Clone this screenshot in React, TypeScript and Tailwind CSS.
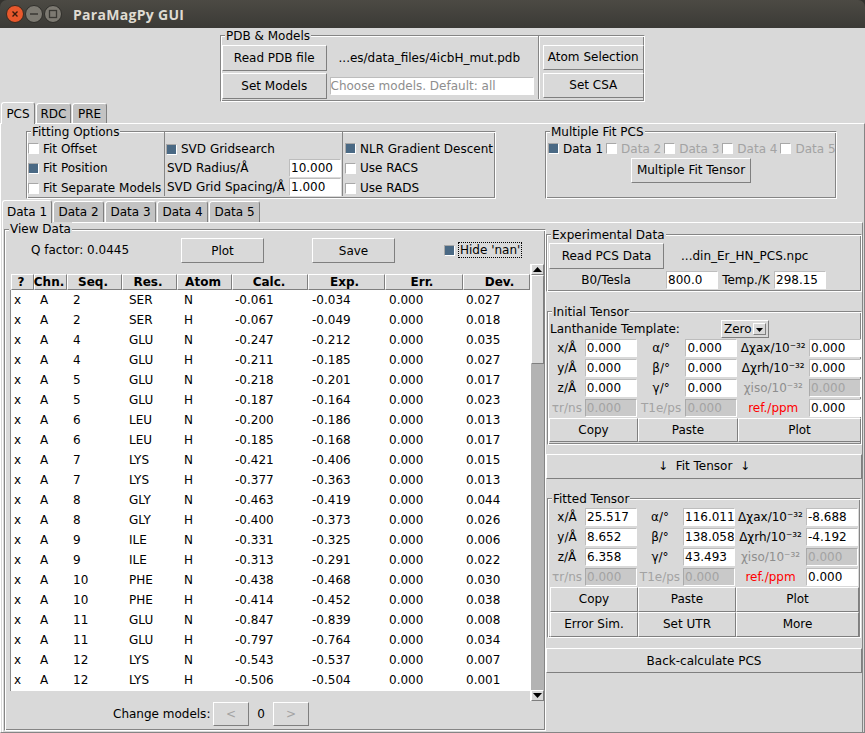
import React from "react";

const RAISED = "flex items-center justify-center bg-[#d9d9d9] border border-t-white border-l-white border-r-[#7f7f7f] border-b-[#7f7f7f] whitespace-nowrap";

function Btn({ children, className = "" }: { children: React.ReactNode; className?: string }) {
  return <div className={`${RAISED} ${className}`}>{children}</div>;
}

function Frame({ label, className = "", labelTop = "top-[-7px]", children }: { label: string; className?: string; labelTop?: string; children?: React.ReactNode }) {
  return (
    <div className={`relative border border-t-[#858585] border-l-[#858585] border-r-white border-b-white shadow-[inset_1px_1px_0_#fff,inset_-1px_-1px_0_#858585] ${className}`}>
      <span className={`absolute ${labelTop} left-[4px] bg-[#d9d9d9] px-px leading-[15px] whitespace-nowrap`}>{label}</span>
      {children}
    </div>
  );
}

function Entry({ value, muted, disabled, className = "" }: { value: string; muted?: boolean; disabled?: boolean; className?: string }) {
  const look = disabled
    ? "bg-[#c9c9c9] text-[#a3a3a3] border-t-[#aaaaaa] border-l-[#aaaaaa] border-r-white border-b-white"
    : muted
    ? "bg-white text-[#8e8e8e] border-t-[#bdbdbd] border-l-[#bdbdbd] border-r-white border-b-white"
    : "bg-white text-black border-t-[#bdbdbd] border-l-[#bdbdbd] border-r-white border-b-white";
  return <div className={`h-[18px] w-[52px] flex-none border pl-[1px] leading-[16px] overflow-hidden whitespace-nowrap ${look} ${className}`}>{value}</div>;
}

function Check({ checked, className = "" }: { checked?: boolean; className?: string }) {
  return (
    <span className={`inline-block flex-none w-[11px] h-[11px] border border-t-[#a8a8a8] border-l-[#a8a8a8] border-r-white border-b-white ${checked ? "bg-[#4a6984]" : "bg-white"} ${className}`} />
  );
}

function CheckRow({ label, checked, className = "" }: { label: string; checked?: boolean; className?: string }) {
  return (
    <div className={`flex items-center whitespace-nowrap ${className}`}>
      <Check checked={checked} />
      <span className="ml-[4px]">{label}</span>
    </div>
  );
}

function TabBtn({ label, active, className = "" }: { label: string; active?: boolean; className?: string }) {
  return (
    <div
      className={`flex items-center justify-center rounded-t-[3px] border-t border-l border-r border-t-white border-l-white border-r-[#7f7f7f] whitespace-nowrap ${
        active ? "bg-[#d9d9d9] relative z-10 mb-[-1px]" : "bg-[#c3c3c3] mt-[1px]"
      } ${className}`}
    >
      {label}
    </div>
  );
}

type Row = [string, string, string, string, string, string];
const ROWS: Row[] = [
  ["2", "SER", "N", "-0.061", "-0.034", "0.027"],
  ["2", "SER", "H", "-0.067", "-0.049", "0.018"],
  ["4", "GLU", "N", "-0.247", "-0.212", "0.035"],
  ["4", "GLU", "H", "-0.211", "-0.185", "0.027"],
  ["5", "GLU", "N", "-0.218", "-0.201", "0.017"],
  ["5", "GLU", "H", "-0.187", "-0.164", "0.023"],
  ["6", "LEU", "N", "-0.200", "-0.186", "0.013"],
  ["6", "LEU", "H", "-0.185", "-0.168", "0.017"],
  ["7", "LYS", "N", "-0.421", "-0.406", "0.015"],
  ["7", "LYS", "H", "-0.377", "-0.363", "0.013"],
  ["8", "GLY", "N", "-0.463", "-0.419", "0.044"],
  ["8", "GLY", "H", "-0.400", "-0.373", "0.026"],
  ["9", "ILE", "N", "-0.331", "-0.325", "0.006"],
  ["9", "ILE", "H", "-0.313", "-0.291", "0.022"],
  ["10", "PHE", "N", "-0.438", "-0.468", "0.030"],
  ["10", "PHE", "H", "-0.414", "-0.452", "0.038"],
  ["11", "GLU", "N", "-0.847", "-0.839", "0.008"],
  ["11", "GLU", "H", "-0.797", "-0.764", "0.034"],
  ["12", "LYS", "N", "-0.543", "-0.537", "0.007"],
  ["12", "LYS", "H", "-0.506", "-0.504", "0.001"],
];

const GRID = "grid grid-cols-[23px_33px_55px_55px_55px_76px_77px_78px_67px]";
const HEADERS: [string, string][] = [
  ["?", "mr-[3px]"],
  ["Chn.", "mr-[3px]"],
  ["Seq.", "mr-[3px]"],
  ["Res.", "mr-[3px]"],
  ["Atom", "mr-[3px]"],
  ["Calc.", "mr-[2px]"],
  ["Exp.", "mr-[4px]"],
  ["Err.", "mr-[4px]"],
  ["Dev.", "ml-[6px]"],
];

function Table() {
  return (
    <div className="w-[520px] mt-[10px]">
      <div className={`${GRID} h-[16px] ml-px`}>
        {HEADERS.map(([h, shift]) => (
          <Btn key={h} className="font-bold h-[16px] leading-none">
            <span className={shift}>{h}</span>
          </Btn>
        ))}
      </div>
      <div className="bg-white border-l border-l-[#8a8a8a] h-[401px]">
        {ROWS.map((r, i) => (
          <div key={i} className={`${GRID} h-[20px] items-center whitespace-nowrap`}>
            <span className="pl-[3px]">x</span>
            <span className="pl-[6px]">A</span>
            <span className="pl-[6px]">{r[0]}</span>
            <span className="pl-[7px]">{r[1]}</span>
            <span className="pl-[7px]">{r[2]}</span>
            <span className="pl-[3px]">{r[3]}</span>
            <span className="pl-[4px]">{r[4]}</span>
            <span className="pl-[4px]">0.000</span>
            <span className="pl-[3px]">{r[5]}</span>
          </div>
        ))}
      </div>
    </div>
  );
}

function Scrollbar() {
  return (
    <div className="w-[14px] h-[437px] flex flex-col bg-[#b3b3b3] border-l border-l-white">
      <Btn className="h-[11px] flex-none">
        <svg width="9" height="5" viewBox="0 0 9 5"><path d="M4.5 0 L9 5 H0 Z" fill="#000" /></svg>
      </Btn>
      <div className={`${RAISED} h-[89px] flex-none`} />
      <div className="flex-1" />
      <Btn className="h-[11px] flex-none">
        <svg width="9" height="5" viewBox="0 0 9 5"><path d="M0 0 H9 L4.5 5 Z" fill="#000" /></svg>
      </Btn>
    </div>
  );
}

function Lbl({ children, className = "" }: { children: React.ReactNode; className?: string }) {
  return <div className={`flex items-center justify-center whitespace-nowrap ${className}`}>{children}</div>;
}

const DIS = "text-[#a3a3a3]";

function TensorGrid({ vals, col2, col3, col2Label }: { vals: string[][]; col2: string; col3: string; col2Label: string }) {
  const rows = [
    ["x/Å", "α/°", "Δχax/10⁻³²"],
    ["y/Å", "β/°", "Δχrh/10⁻³²"],
    ["z/Å", "γ/°", "χiso/10⁻³²"],
  ];
  return (
    <div className="flex flex-col">
      {rows.map((r, i) => (
        <div key={i} className="flex items-center h-[20px]">
          <Lbl className="w-[36px]">{r[0]}</Lbl>
          <Entry value={vals[i][0]} />
          <Lbl className={col2}>{r[1]}</Lbl>
          <Entry value={vals[i][1]} />
          <Lbl className={`${col3} ${i === 2 ? "text-[#8e8e8e]" : ""}`}>{r[2]}</Lbl>
          <Entry value={vals[i][2]} disabled={i === 2} />
        </div>
      ))}
      <div className="flex items-center h-[20px]">
        <Lbl className={`w-[36px] ${DIS}`}>τr/ns</Lbl>
        <Entry value="0.000" disabled />
        <Lbl className={`${col2} ${DIS}`}>{col2Label}</Lbl>
        <Entry value="0.000" disabled />
        <Lbl className={`${col3} text-[#ff0000]`}>ref./ppm</Lbl>
        <Entry value="0.000" />
      </div>
    </div>
  );
}

function TitleButtons() {
  return (
    <svg width="64" height="20" viewBox="0 0 64 20" className="ml-[5px]">
      <circle cx="10" cy="10" r="8.5" fill="#e9582c" stroke="#3a2a20" />
      <path d="M7.5 7.5 L12.5 12.5 M12.5 7.5 L7.5 12.5" stroke="#3a1a0c" strokeWidth="1.4" />
      <circle cx="29" cy="10" r="8.5" fill="#7d7a72" stroke="#2f2e2a" />
      <path d="M25 10 H33" stroke="#3a3934" strokeWidth="1.5" />
      <circle cx="48" cy="10" r="8.5" fill="#7d7a72" stroke="#2f2e2a" />
      <rect x="44.5" y="6.5" width="7" height="7" fill="none" stroke="#3a3934" strokeWidth="1.3" />
    </svg>
  );
}

export default function App() {
  return (
    <div className="w-[865px] h-[733px] overflow-hidden bg-[#33322e] text-[12px] text-black flex flex-col font-['DejaVu_Sans',sans-serif]">
      {/* Title bar */}
      <div className="h-[28px] flex-none flex items-center rounded-t-[7px] bg-gradient-to-b from-[#4c4a44] to-[#3b3a36]">
        <TitleButtons />
        <span className="ml-[4px] text-[14px] font-bold tracking-[0.3px] text-[#dfdbd2] font-['Open_Sans',sans-serif]">ParaMagPy GUI</span>
      </div>

      <div className="flex-1 flex flex-col bg-[#d9d9d9] min-h-0">
        {/* PDB & Models */}
        <div className="h-[74px] flex-none pt-[7px] pl-[220px]">
          <Frame label="PDB & Models" className="w-[425px] h-[67px] flex pl-[1px] pt-[9px]">
            <div className="flex flex-col gap-[2px] w-[105px]">
              <Btn className="h-[26px]">Read PDB file</Btn>
              <Btn className="h-[26px]">Set Models</Btn>
            </div>
            <div className="w-[203px] ml-[3px] flex flex-col">
              <div className="h-[26px] flex items-center pl-[9px] whitespace-nowrap">...es/data_files/4icbH_mut.pdb</div>
              <Entry value="Choose models. Default: all" muted className="w-[204px] mt-[6px] !pl-0" />
            </div>
            <div className="ml-[5px] mb-[2px] mt-[-9px] w-[2px] bg-white border-l border-l-[#858585]" />
            <div className="ml-[3px] flex flex-col gap-[3px] w-[102px]">
              <Btn className="h-[25px] pb-px">Atom Selection</Btn>
              <Btn className="h-[25px] pb-px">Set CSA</Btn>
            </div>
          </Frame>
        </div>

        {/* Top tabs */}
        <div className="h-[21px] flex-none flex items-stretch pl-px gap-[1px]">
          <TabBtn label="PCS" active className="w-[34px]" />
          <TabBtn label="RDC" className="w-[35px]" />
          <TabBtn label="PRE" className="w-[35px]" />
        </div>

        {/* Outer notebook */}
        <div className="flex-1 min-h-0 flex flex-col border-t border-t-white border-r border-r-[#858585] border-b border-b-[#858585] border-l border-l-white">
          <div className="h-[76px] flex-none flex pt-[7px]">
            <Frame label="Fitting Options" className="ml-[25px] w-[470px] h-[68px] flex pl-[1px] pt-[7px]">
              <div className="w-[136px] flex flex-col">
                <CheckRow label="Fit Offset" className="h-[19px]" />
                <CheckRow checked label="Fit Position" className="h-[20px]" />
                <CheckRow label="Fit Separate Models" className="h-[20px]" />
              </div>
              <div className="w-[179px] mt-[-7px] mb-[2px] pl-[2px] pt-[8px] flex flex-col border-l border-l-[#858585] border-r border-r-[#858585]">
                <CheckRow checked label="SVD Gridsearch" className="h-[19px] ml-[-1px]" />
                <div className="h-[20px] flex items-center justify-between whitespace-nowrap">
                  <span>SVD Radius/Å</span>
                  <Entry value="10.000" className="mr-px" />
                </div>
                <div className="h-[20px] flex items-center justify-between whitespace-nowrap">
                  <span>SVD Grid Spacing/Å</span>
                  <Entry value="1.000" className="mr-px" />
                </div>
              </div>
              <div className="pl-[2px] flex flex-col">
                <CheckRow checked label="NLR Gradient Descent" className="h-[19px]" />
                <CheckRow label="Use RACS" className="h-[20px]" />
                <CheckRow label="Use RADS" className="h-[20px]" />
              </div>
            </Frame>
            <Frame label="Multiple Fit PCS" className="ml-[49px] w-[292px] h-[68px] pl-[2px] pt-[7px]">
              <div className="flex items-center h-[19px] whitespace-nowrap">
                <Check checked />
                <span className="ml-[4px]">Data 1</span>
                {["Data 2", "Data 3", "Data 4", "Data 5"].map((d) => (
                  <React.Fragment key={d}>
                    <Check className="ml-[3px]" />
                    <span className={`ml-[4px] ${DIS}`}>{d}</span>
                  </React.Fragment>
                ))}
              </div>
              <div className="flex justify-center pr-[2px]">
                <Btn className="w-[120px] h-[25px] pb-px">Multiple Fit Tensor</Btn>
              </div>
            </Frame>
          </div>

          {/* Data tabs */}
          <div className="h-[22px] flex-none flex items-stretch pl-px gap-px">
            <TabBtn label="Data 1" active className="w-[50px]" />
            <TabBtn label="Data 2" className="w-[51px]" />
            <TabBtn label="Data 3" className="w-[51px]" />
            <TabBtn label="Data 4" className="w-[51px]" />
            <TabBtn label="Data 5" className="w-[51px]" />
          </div>

          {/* Data notebook */}
          <div className="flex-1 min-h-0 flex ml-px border-t border-t-white border-r border-r-[#858585] border-l border-l-white mr-px">
            <div className="w-[543px] flex-none pl-[1px] pt-[6px]">
              <Frame label="View Data" labelTop="top-[-8px]" className="w-[542px] h-[502px] flex flex-col">
                <div className="h-[34px] flex-none flex items-end whitespace-nowrap">
                  <span className="ml-[26px] w-[150px] mb-[5px]">Q factor: 0.0445</span>
                  <Btn className="w-[83px] h-[25px] mb-px">Plot</Btn>
                  <Btn className="ml-[48px] w-[83px] h-[25px] mb-px">Save</Btn>
                  <Check checked className="ml-[49px] mb-[8px]" />
                  <span className="ml-[3px] mb-[6px] px-[1px] h-[16px] leading-[14px] border border-dotted border-black">Hide 'nan'</span>
                </div>
                <div className="flex ml-[5px]">
                  <Table />
                  <Scrollbar />
                </div>
                <div className="flex items-center h-[24px] mt-[1px] whitespace-nowrap">
                  <span className="ml-[108px] w-[100px]">Change models:</span>
                  <Btn className="w-[36px] h-[24px] text-[#a3a3a3]">&lt;</Btn>
                  <span className="w-[24px] text-center">0</span>
                  <Btn className="w-[36px] h-[24px] text-[#a3a3a3]">&gt;</Btn>
                </div>
              </Frame>
            </div>

            <div className="w-[316px] flex-none flex flex-col pt-[11px]">
              <Frame label="Experimental Data" className="w-[316px] h-[58px] flex flex-col pl-[2px] pt-[7px]">
                <div className="flex items-center h-[27px]">
                  <Btn className="w-[115px] h-[26px]">Read PCS Data</Btn>
                  <span className="ml-[17px] whitespace-nowrap">...din_Er_HN_PCS.npc</span>
                </div>
                <div className="flex items-center h-[20px] mt-[1px]">
                  <Lbl className="w-[117px] pr-[3px]">B0/Tesla</Lbl>
                  <Entry value="800.0" />
                  <Lbl className="w-[56px]">Temp./K</Lbl>
                  <Entry value="298.15" />
                </div>
              </Frame>

              <Frame label="Initial Tensor" className="mt-[19px] ml-px w-[315px] h-[134px] flex flex-col pl-[1px] pt-[7px]">
                <div className="flex items-center h-[19px] whitespace-nowrap ml-[1px]">
                  <span className="w-[171px]">Lanthanide Template:</span>
                  <div className={`${RAISED} w-[48px] h-[18px] !justify-between px-[2px] border-t-[#b5b5b5] border-l-[#b5b5b5]`}>
                    <span>Zero</span>
                    <span className={`${RAISED} w-[13px] h-[12px]`}>
                      <svg width="7" height="4" viewBox="0 0 7 4" className="mt-[3px]"><path d="M0 0 H7 L3.5 4 Z" fill="#000" /></svg>
                    </span>
                  </div>
                </div>
                <TensorGrid
                  col2="w-[49px]"
                  col3="w-[72px]"
                  col2Label="T1e/ps"
                  vals={[["0.000", "0.000", "0.000"], ["0.000", "0.000", "0.000"], ["0.000", "0.000", "0.000"]]}
                />
                <div className="flex h-[24px]">
                  <Btn className="w-[89px] pb-px">Copy</Btn>
                  <Btn className="w-[100px] pb-px">Paste</Btn>
                  <Btn className="w-[123px] pb-px">Plot</Btn>
                </div>
              </Frame>

              <Btn className="mt-[9px] w-[316px] h-[25px] pb-px">↓&nbsp;&nbsp;Fit Tensor&nbsp;&nbsp;↓</Btn>

              <Frame label="Fitted Tensor" className="mt-[19px] ml-[1px] w-[314px] h-[140px] flex flex-col pl-[1px] pt-[8px]">
                <TensorGrid
                  col2="w-[46px]"
                  col3="w-[71px]"
                  col2Label="T1e/ps"
                  vals={[["25.517", "116.011", "-8.688"], ["8.652", "138.058", "-4.192"], ["6.358", "43.493", "0.000"]]}
                />
                <div className="flex h-[25px] ml-px">
                  <Btn className="w-[88px] pb-px">Copy</Btn>
                  <Btn className="w-[98px] pb-px">Paste</Btn>
                  <Btn className="w-[123px] pb-px">Plot</Btn>
                </div>
                <div className="flex h-[25px] ml-px">
                  <Btn className="w-[88px] pb-px">Error Sim.</Btn>
                  <Btn className="w-[98px] pb-px">Set UTR</Btn>
                  <Btn className="w-[123px] pb-px">More</Btn>
                </div>
              </Frame>

              <Btn className="mt-[10px] w-[316px] h-[25px]">Back-calculate PCS</Btn>
            </div>
          </div>
        </div>
      </div>
    </div>
  );
}
